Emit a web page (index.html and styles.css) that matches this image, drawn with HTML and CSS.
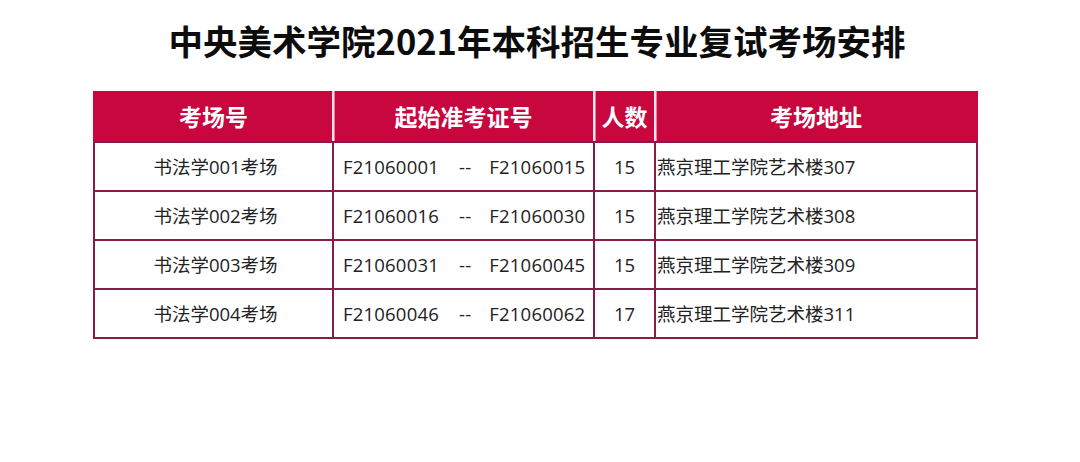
FILE: index.html
```html
<!DOCTYPE html>
<html lang="zh-CN">
<head>
<meta charset="utf-8">
<title>中央美术学院2021年本科招生专业复试考场安排</title>
<link rel="stylesheet" href="styles.css">
</head>
<body>
<div class="page">
  <h1 class="title">中央美术学院2021年本科招生专业复试考场安排</h1>
  <div class="table">
    <div class="row head">
      <div class="cell">考场号</div>
      <div class="cell">起始准考证号</div>
      <div class="cell">人数</div>
      <div class="cell">考场地址</div>
    </div>
    <div class="row body">
      <div class="cell c-name">书法学001考场</div>
      <div class="cell c-range"><span class="code">F21060001</span><span class="dash">--</span><span class="code">F21060015</span></div>
      <div class="cell c-num">15</div>
      <div class="cell c-addr">燕京理工学院艺术楼307</div>
    </div>
    <div class="row body">
      <div class="cell c-name">书法学002考场</div>
      <div class="cell c-range"><span class="code">F21060016</span><span class="dash">--</span><span class="code">F21060030</span></div>
      <div class="cell c-num">15</div>
      <div class="cell c-addr">燕京理工学院艺术楼308</div>
    </div>
    <div class="row body">
      <div class="cell c-name">书法学003考场</div>
      <div class="cell c-range"><span class="code">F21060031</span><span class="dash">--</span><span class="code">F21060045</span></div>
      <div class="cell c-num">15</div>
      <div class="cell c-addr">燕京理工学院艺术楼309</div>
    </div>
    <div class="row body last">
      <div class="cell c-name">书法学004考场</div>
      <div class="cell c-range"><span class="code">F21060046</span><span class="dash">--</span><span class="code">F21060062</span></div>
      <div class="cell c-num">17</div>
      <div class="cell c-addr">燕京理工学院艺术楼311</div>
    </div>
  </div>
</div>
</body>
</html>
```

FILE: styles.css
```css
* { box-sizing: border-box; }
html, body {
  margin: 0;
  padding: 0;
  background: #ffffff;
}
body {
  width: 1080px;
  height: 462px;
  overflow: hidden;
  font-family: "Open Sans", "Noto Sans CJK SC", sans-serif;
  color: #222222;
}
.page {
  padding-top: 18px;
}
.title {
  margin: 0;
  height: 46px;
  line-height: 44px;
  text-align: center;
  font-family: "Noto Sans CJK SC", sans-serif;
  font-weight: 700;
  font-size: 34.5px;
  color: #0c0c0c;
  padding-right: 6px;
}
.table {
  margin-top: 27px;
  margin-left: 93px;
  width: 885px;
}
.row {
  display: grid;
  grid-template-columns: 241px 261px 61px 322px;
}
.cell {
  display: flex;
  align-items: center;
  border-right: 2px solid #861c47;
}
.head {
  height: 50px;
  background: #c8073f;
}
.head .cell {
  justify-content: center;
  color: #ffffff;
  font-family: "Noto Sans CJK SC", sans-serif;
  font-weight: 700;
  font-size: 23px;
  border-right: 2px solid #fbe6ee;
  box-shadow: 1px 0 0 #f07aa0;
}
.head .cell:first-child {
  border-left: 2px solid #c8073f;
}
.head .cell:last-child {
  border-right: 2px solid #c8073f;
  box-shadow: none;
}
.body {
  height: 49px;
}
.body .cell {
  border-top: 2px solid #861c47;
  font-size: 18.5px;
  padding-bottom: 1px;
}
.body .cell:first-child {
  border-left: 2px solid #861c47;
}
.body.last {
  height: 51px;
}
.body.last .cell {
  border-bottom: 2px solid #861c47;
}
.c-name {
  justify-content: center;
  padding-left: 4px;
}
.c-range {
  padding-left: 9px;
  letter-spacing: 0.2px;
}
.dash {
  margin: 0 18px 0 20px;
}
.c-num {
  justify-content: center;
}
.c-addr {
  padding-left: 1px;
}
```
